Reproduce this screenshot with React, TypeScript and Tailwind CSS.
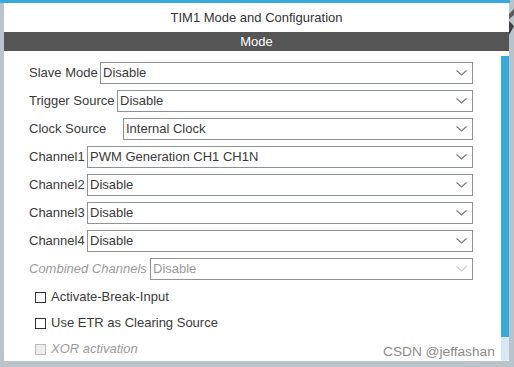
const font = { fontFamily: '"Liberation Sans", Arial, sans-serif' };

function Chevron({ disabled }: { disabled?: boolean }) {
  return (
    <svg width="11" height="6" viewBox="0 0 11 6" className="shrink-0">
      <path d="M0.5 0.5 L5.5 5 L10.5 0.5" fill="none" stroke={disabled ? '#c8c8c8' : '#7a7a7a'} strokeWidth="1.1" />
    </svg>
  );
}

interface RowProps {
  label: string;
  value: string;
  labelW: string;
  disabled?: boolean;
}

function SelectRow({ label, value, labelW, disabled }: RowProps) {
  return (
    <div className="flex items-center h-[22px]">
      <span className={`${labelW} shrink-0 whitespace-nowrap ${disabled ? 'italic text-[#9a9a9a]' : 'text-[#3a3a3a]'}`}>
        {label}
      </span>
      <div className="flex-1 h-[22px] border border-[#8d9296] flex items-center pl-[2px] pr-[5px]">
        <span className={`flex-1 whitespace-nowrap ${disabled ? 'text-[#9a9a9a]' : 'text-[#3a3a3a]'}`}>{value}</span>
        <Chevron disabled={disabled} />
      </div>
    </div>
  );
}

function Check({ label, disabled }: { label: string; disabled?: boolean }) {
  return (
    <div className="flex items-center h-[20px] pl-[6px] gap-[5px]">
      <span
        className={`w-[11px] h-[11px] border ${disabled ? 'border-[#bdbdbd] bg-[#ececec]' : 'border-[#333] bg-white'}`}
      />
      <span className={disabled ? 'italic text-[#9a9a9a]' : 'text-[#3a3a3a]'}>{label}</span>
    </div>
  );
}

export default function App() {
  return (
    <div className="w-[514px] h-[367px] bg-[#b9c3c9] relative overflow-hidden text-[13px]" style={font}>
      {/* top accent */}
      <div className="h-[3px] bg-[#36a9dd] mr-[4px]" />

      <div className="flex h-[358px]">
        <div className="w-[4px] shrink-0" />

        {/* Panel */}
        <div className="w-[505px] bg-white flex flex-col">
          <div className="h-[29px] flex items-center justify-center text-[#333] pt-[1px]">
            TIM1 Mode and Configuration
          </div>
          <div className="h-[19px] bg-[#545554] text-white flex items-center justify-center">Mode</div>

          <div className="flex flex-1 min-h-0">
            <div className="flex-1 pl-[25px] pr-[28px] pt-[11px] flex flex-col">
              <div className="flex flex-col gap-[6px]">
                <SelectRow label="Slave Mode" value="Disable" labelW="w-[71px]" />
                <SelectRow label="Trigger Source" value="Disable" labelW="w-[88px]" />
                <SelectRow label="Clock Source" value="Internal Clock" labelW="w-[94px]" />
                <SelectRow label="Channel1" value="PWM Generation CH1 CH1N" labelW="w-[58px]" />
                <SelectRow label="Channel2" value="Disable" labelW="w-[58px]" />
                <SelectRow label="Channel3" value="Disable" labelW="w-[58px]" />
                <SelectRow label="Channel4" value="Disable" labelW="w-[58px]" />
                <SelectRow label="Combined Channels" value="Disable" labelW="w-[121px]" disabled />
              </div>
              <div className="flex flex-col gap-[6px] mt-[7px]">
                <Check label="Activate-Break-Input" />
                <Check label="Use ETR as Clearing Source" />
                <Check label="XOR activation" disabled />
              </div>
            </div>

            {/* Scrollbar */}
            <div className="w-[8px] mt-[5px] flex flex-col">
              <div className="h-[281px] bg-[#36a9dd]" />
              <div className="flex-1 bg-[#d6e6f4] rounded-b-[3px]" />
            </div>
          </div>
        </div>

        {/* right edge */}
        <div className="flex-1 pt-[6px]">
          <svg width="5" height="27" viewBox="0 0 5 27">
            <path d="M5 0 L0 5 L0 10 L5 6 Z" fill="#5a5a5a" />
            <path d="M0 12 L5 17 L0 26 Z" fill="#3f3f3f" />
          </svg>
        </div>
      </div>

      <span className="absolute left-[383px] top-[342px] text-[13.7px] text-[#8c8c8c] whitespace-nowrap">
        CSDN @jeffashan
      </span>
    </div>
  );
}
